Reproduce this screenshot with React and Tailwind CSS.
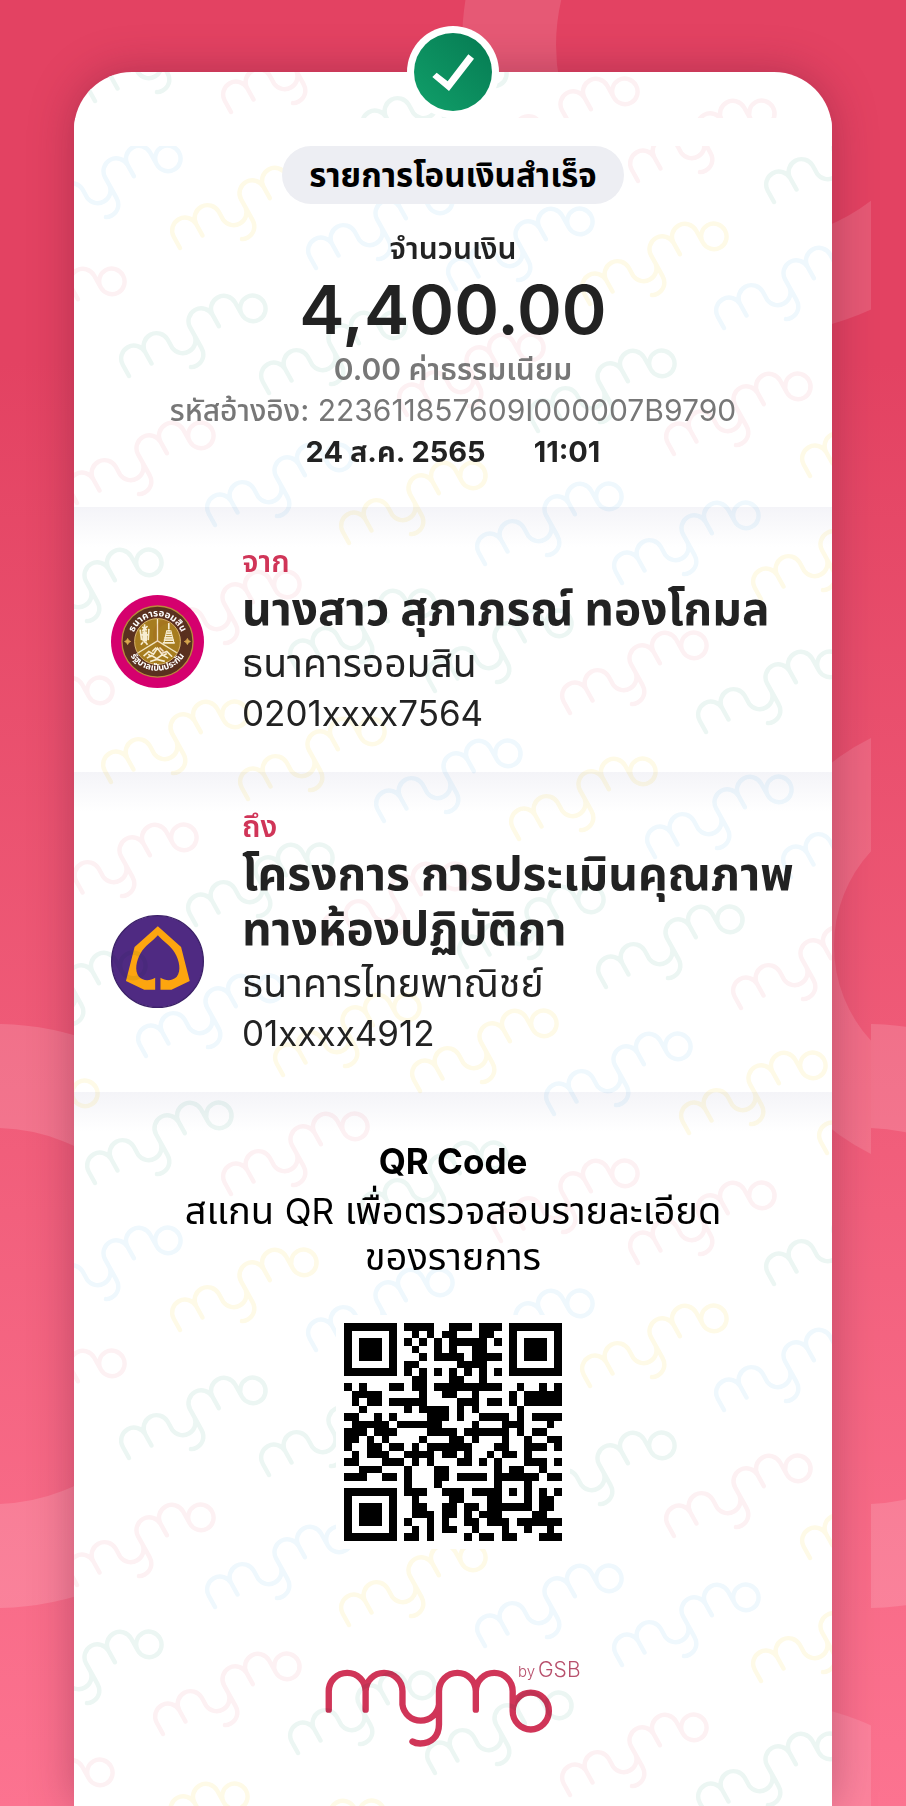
import React from "react";

const QR_ROWS = [
  "11111110" + "1111001110111" + "01111111",
  "10000010" + "0101011000110" + "01000001",
  "10111010" + "1010101111101" + "01011101",
  "10111010" + "0100101001100" + "01011101",
  "10111010" + "0010111101111" + "01011101",
  "10000010" + "1100000111100" + "01000001",
  "11111110" + "1010101010101" + "01111111",
  "00000000" + "0110001100100" + "00000000",
  "10100011" + "0110111111111" + "00100101",
  "01111000" + "0010011001000" + "01011111",
  "01011011" + "1110000111011" + "01011111",
  "00100000" + "1011110101000" + "00100000",
  "11001010" + "0001110100111" + "10101111",
  "01111101" + "1111100001000" + "11100010",
  "11101110" + "0001111011111" + "10101100",
  "11010100" + "0010001101000" + "10010011",
  "10011011" + "0101111110001" + "10011101",
  "01011100" + "1111011010010" + "11010000",
  "11000111" + "0101000110101" + "00011101",
  "00111000" + "1000110000001" + "01100100",
  "11100110" + "1000110111101" + "11111011",
  "00000000" + "1000100000001" + "00010000",
  "11111110" + "1110011101111" + "01010101",
  "10000010" + "0100001100011" + "00010110",
  "10111010" + "0110011011011" + "11110110",
  "10111010" + "0111011010111" + "00001100",
  "10111010" + "1001010011011" + "10111111",
  "10000010" + "0101011001000" + "10010010",
  "11111110" + "1101000010110" + "11000111",
];

const PINK = "#fdf1f3";
const BLUE = "#eff8fd";
const GREEN = "#ecf6f3";
const YELLOW = "#fefae7";

const MARKS = [
  [173, 255, YELLOW], [122, 383, GREEN], [309, 275, BLUE], [449, 296, BLUE],
  [583, 311, YELLOW], [717, 335, BLUE], [-19, 356, PINK], [262, 400, GREEN],
  [400, 422, PINK], [531, 438, GREEN], [667, 461, PINK], [803, 483, YELLOW],
  [70, 510, PINK], [208, 532, BLUE], [342, 550, YELLOW], [478, 571, BLUE],
  [615, 590, BLUE], [754, 606, YELLOW], [18, 637, GREEN], [156, 659, PINK],
  [291, 678, GREEN], [428, 698, GREEN], [563, 720, PINK], [699, 739, GREEN],
  [-31, 765, PINK], [104, 789, YELLOW], [241, 806, YELLOW], [377, 828, BLUE],
  [512, 846, YELLOW], [648, 864, BLUE], [784, 884, BLUE], [53, 912, PINK],
  [189, 932, GREEN], [324, 951, PINK], [460, 974, GREEN], [599, 994, GREEN],
  [734, 1015, PINK], [2, 1040, GREEN], [139, 1063, BLUE], [276, 1082, YELLOW],
  [413, 1098, YELLOW], [547, 1121, BLUE], [682, 1140, YELLOW], [820, 1160, YELLOW],
  [-46, 1168, YELLOW], [88, 1190, GREEN], [224, 1201, PINK], [363, 1230, GREEN],
  [494, 1248, PINK], [631, 1270, PINK], [767, 1291, GREEN], [37, 1315, BLUE],
];

const MYMO_PATH =
  "M56 208V153a55 55 0 0 1 110 0V208M166 153a55 55 0 0 1 110 0V193a55 55 0 0 0 109 0M385 153V252c0 36-24 57-56 57-10 0-17-2-23-6M385 153a55 55 0 0 1 110 0V208M495 153a55 55 0 0 1 110 0V212a54 55 0 1 0 108 0a54 55 0 1 0-108 0";

function Backdrop() {
  return (
    <svg className="absolute inset-0 h-full w-full" aria-hidden="true">
      <defs>
        <pattern id="rings" width="871" height="1945" patternUnits="userSpaceOnUse">
          <g fill="none" stroke="#fff" strokeOpacity="0.12">
            <circle cx="752" cy="45" r="243" strokeWidth="94" />
            <circle cx="752" cy="1990" r="243" strokeWidth="94" />
            <circle cx="974" cy="946" r="186" strokeWidth="92" />
            <circle cx="-6" cy="1316" r="240" strokeWidth="104" strokeOpacity="0.14" />
          </g>
        </pattern>
      </defs>
      <rect width="100%" height="100%" fill="url(#rings)" />
    </svg>
  );
}

function Watermark() {
  return (
    <svg className="absolute inset-0 h-full w-full" aria-hidden="true">
      <defs>
        <path
          id="mymo-mark"
          d={MYMO_PATH}
          fill="none"
          strokeWidth="19"
          strokeLinecap="round"
          transform="translate(7 -7) rotate(-29) scale(0.234) translate(-56 -208)"
        />
      </defs>
      {[-1082, 0, 1082].map((shift) =>
        MARKS.map(([x, y, color]) => (
          <use
            key={`${shift}-${x}-${y}`}
            href="#mymo-mark"
            x={x - 74}
            y={y - 72 + shift}
            stroke={color}
          />
        ))
      )}
      <rect y="46" width="100%" height="28" fill="#fff" />
    </svg>
  );
}

function SuccessBadge() {
  return (
    <div className="absolute -top-[46px] left-1/2 size-[92px] -translate-x-1/2 rounded-full bg-white p-[7px]">
      <div className="size-full rounded-full bg-linear-to-tr from-[#11a06a] to-[#067a52]">
        <svg viewBox="43 39 234 234" className="size-full" role="img" aria-label="สำเร็จ">
          <path d="M98 171l13-13 33 26 62-81 17 13-75 97z" fill="#fff" />
        </svg>
      </div>
    </div>
  );
}

function GsbSeal() {
  return (
    <svg viewBox="0 0 280 280" className="size-[93px]" role="img" aria-label="ธนาคารออมสิน">
      <defs>
        <path id="seal-top" d="M64 140a76 76 0 0 1 152 0" />
        <path id="seal-bottom" d="M44 132a96 96 0 0 0 192 0" />
      </defs>
      <circle cx="140" cy="140" r="140" fill="#d5006e" />
      <circle cx="140" cy="140" r="107" fill="#5a301f" stroke="#b98a3a" strokeWidth="4" />
      <circle cx="140" cy="140" r="69" fill="#a67c1f" stroke="#d8b36a" strokeWidth="3" />
      <path d="M140 72v66M140 138l-58 36M140 138l58 36" stroke="#f3e6c4" strokeWidth="4" />
      <g stroke="#f7edd2" strokeWidth="5" fill="none">
        <path d="M101 88v56M94 96l14 10M110 94l-16 14M88 104l4 32M114 102l-2 34M92 120h20M96 142l-6 8M104 142l6 8M97 110v30M106 110v30" />
        <path d="M174 84v20M169 108h10M166 115h16M164 122h20M161 129h26M159 136h30M156 144h36" />
        <path d="M168 106l-8 36M180 106l9 36" strokeWidth="3" />
        <path d="M98 184l16-14 14 8 12-18 12 16 16-6 16 16M108 190l14-8 16 10 16-12 18 10M118 200l20-6 24 6M136 158l-12 12M146 158l12 12M112 178l10 8M158 182l10-6" />
      </g>
      <path
        d="M50 131l3 6 6 3-6 3-3 6-3-6-6-3 6-3zM230 131l3 6 6 3-6 3-3 6-3-6-6-3 6-3z"
        fill="#d8a94e"
        stroke="#d8a94e"
        strokeWidth="3"
      />
      <g fill="#fff" fontSize="29" fontWeight="700" textAnchor="middle">
        <text>
          <textPath href="#seal-top" startOffset="50%">ธนาคารออมสิน</textPath>
        </text>
        <text fontSize="27">
          <textPath href="#seal-bottom" startOffset="50%">รัฐบาลเป็นประกัน</textPath>
        </text>
      </g>
    </svg>
  );
}

function ScbLogo() {
  return (
    <svg viewBox="0 0 280 280" className="size-[93px]" role="img" aria-label="ธนาคารไทยพาณิชย์">
      <circle cx="140" cy="140" r="138" fill="#4f2a82" stroke="#3c2168" strokeWidth="4" />
      <path
        d="M141 34L211 96 237 199 182 225H149V189C164 198 184 200 198 186 212 168 206 138 192 114 180 92 158 80 141 61 124 80 102 92 90 114 76 138 70 168 84 186 98 200 118 198 133 189V225H100L45 199 71 96z"
        fill="#fda50f"
      />
    </svg>
  );
}

function Party({ label, name, bank, account, logo }) {
  return (
    <section className="flex items-end bg-linear-to-b from-[#f4f4f8] to-white to-[40px] px-[37px] pt-[34px] pb-[36px]">
      <div className="mb-[48px] shrink-0">{logo}</div>
      <div className="ml-[38px] min-w-0 flex-1 text-[#222]">
        <h2 className="text-[30px] leading-[40px] font-semibold text-[#d03558]">{label}</h2>
        <p className="text-[46px] leading-[55px] font-bold">
          {name.map((line) => (
            <span key={line} className="block whitespace-nowrap">{line}</span>
          ))}
        </p>
        <p className="text-[39px] leading-[54px]">{bank}</p>
        <p className="text-[35px] leading-[46px]">{account}</p>
      </div>
    </section>
  );
}

function QrCode() {
  return (
    <div className="relative mt-[36px] size-[234px] bg-white p-2">
      <svg viewBox="0 0 29 29" className="size-full" shapeRendering="crispEdges" role="img" aria-label="QR Code">
        {QR_ROWS.map((row, y) =>
          (row.match(/1+|0+/g) || []).reduce(
            (acc, run) => {
              if (run[0] === "1") {
                acc.items.push(<rect key={`${y}-${acc.x}`} x={acc.x} y={y} width={run.length} height="1" />);
              }
              acc.x += run.length;
              return acc;
            },
            { x: 0, items: [] }
          ).items
        )}
      </svg>
    </div>
  );
}

function MymoLogo() {
  return (
    <svg viewBox="-3 -6 260 94" className="mt-[105px] h-[94px] w-[260px]" role="img" aria-label="mymo by GSB">
      <path
        d={MYMO_PATH}
        transform="translate(-16 -20) scale(0.335)"
        fill="none"
        stroke="#d03558"
        strokeWidth="19"
        strokeLinecap="round"
      />
      <g fill="#b8506c" fontFamily="Inter, 'Liberation Sans', sans-serif" fontWeight="300">
        <text x="192" y="17" fontSize="15">by</text>
        <text x="212" y="17" fontSize="21">GSB</text>
      </g>
    </svg>
  );
}

export default function App() {
  return (
    <main className="relative flex min-h-screen flex-col bg-linear-to-b from-[#e34262] from-20% to-[#fc7390] px-[74px] pt-[72px] font-['Inter','Noto_Sans_Thai','Noto_Sans','Liberation_Sans',sans-serif]">
      <Backdrop />
      <article className="relative flex flex-1 flex-col rounded-t-[58px] bg-white shadow-[0_0_44px_rgba(90,20,50,0.35)]">
        <div className="isolate flex flex-1 flex-col overflow-hidden rounded-t-[58px]">
          <div className="absolute inset-0 overflow-hidden rounded-t-[58px] mix-blend-multiply">
            <Watermark />
          </div>
          <header className="flex flex-col items-center px-6 pt-[74px] pb-[35px] text-center text-[#222]">
            <h1 className="relative rounded-full bg-[#edeef3] px-[27px] text-[33px] leading-[58px] font-bold text-black">
              รายการโอนเงินสำเร็จ
            </h1>
            <p className="relative mt-[23px] text-[30px] leading-[42px] font-semibold">จำนวนเงิน</p>
            <p className="relative text-[68px] leading-[80px] font-semibold">4,400.00</p>
            <p className="relative text-[30px] leading-[41px] font-semibold text-[#777]">0.00 ค่าธรรมเนียม</p>
            <p className="relative text-[30px] leading-[41px] whitespace-nowrap text-[#777]">
              <span className="font-medium">รหัสอ้างอิง:</span> 223611857609I000007B9790
            </p>
            <p className="relative flex gap-[48px] text-[29px] leading-[41px] font-bold">
              <span>24 ส.ค. 2565</span>
              <span>11:01</span>
            </p>
          </header>
          <Party
            label="จาก"
            name={["นางสาว สุภาภรณ์ ทองโกมล"]}
            bank="ธนาคารออมสิน"
            account="0201xxxx7564"
            logo={<GsbSeal />}
          />
          <Party
            label="ถึง"
            name={["โครงการ การประเมินคุณภาพ", "ทางห้องปฏิบัติกา"]}
            bank="ธนาคารไทยพาณิชย์"
            account="01xxxx4912"
            logo={<ScbLogo />}
          />
          <section className="flex flex-1 flex-col items-center bg-linear-to-b from-[#f4f4f8] to-white to-[40px] px-6 pt-[43px] text-center text-black">
            <h2 className="text-[35px] leading-[53px] font-bold">QR Code</h2>
            <p className="text-[38px] leading-[45px]">
              สแกน <span className="text-[35px]">QR</span> เพื่อตรวจสอบรายละเอียด
              <br />
              ของรายการ
            </p>
            <QrCode />
            <MymoLogo />
          </section>
        </div>
        <SuccessBadge />
      </article>
    </main>
  );
}
